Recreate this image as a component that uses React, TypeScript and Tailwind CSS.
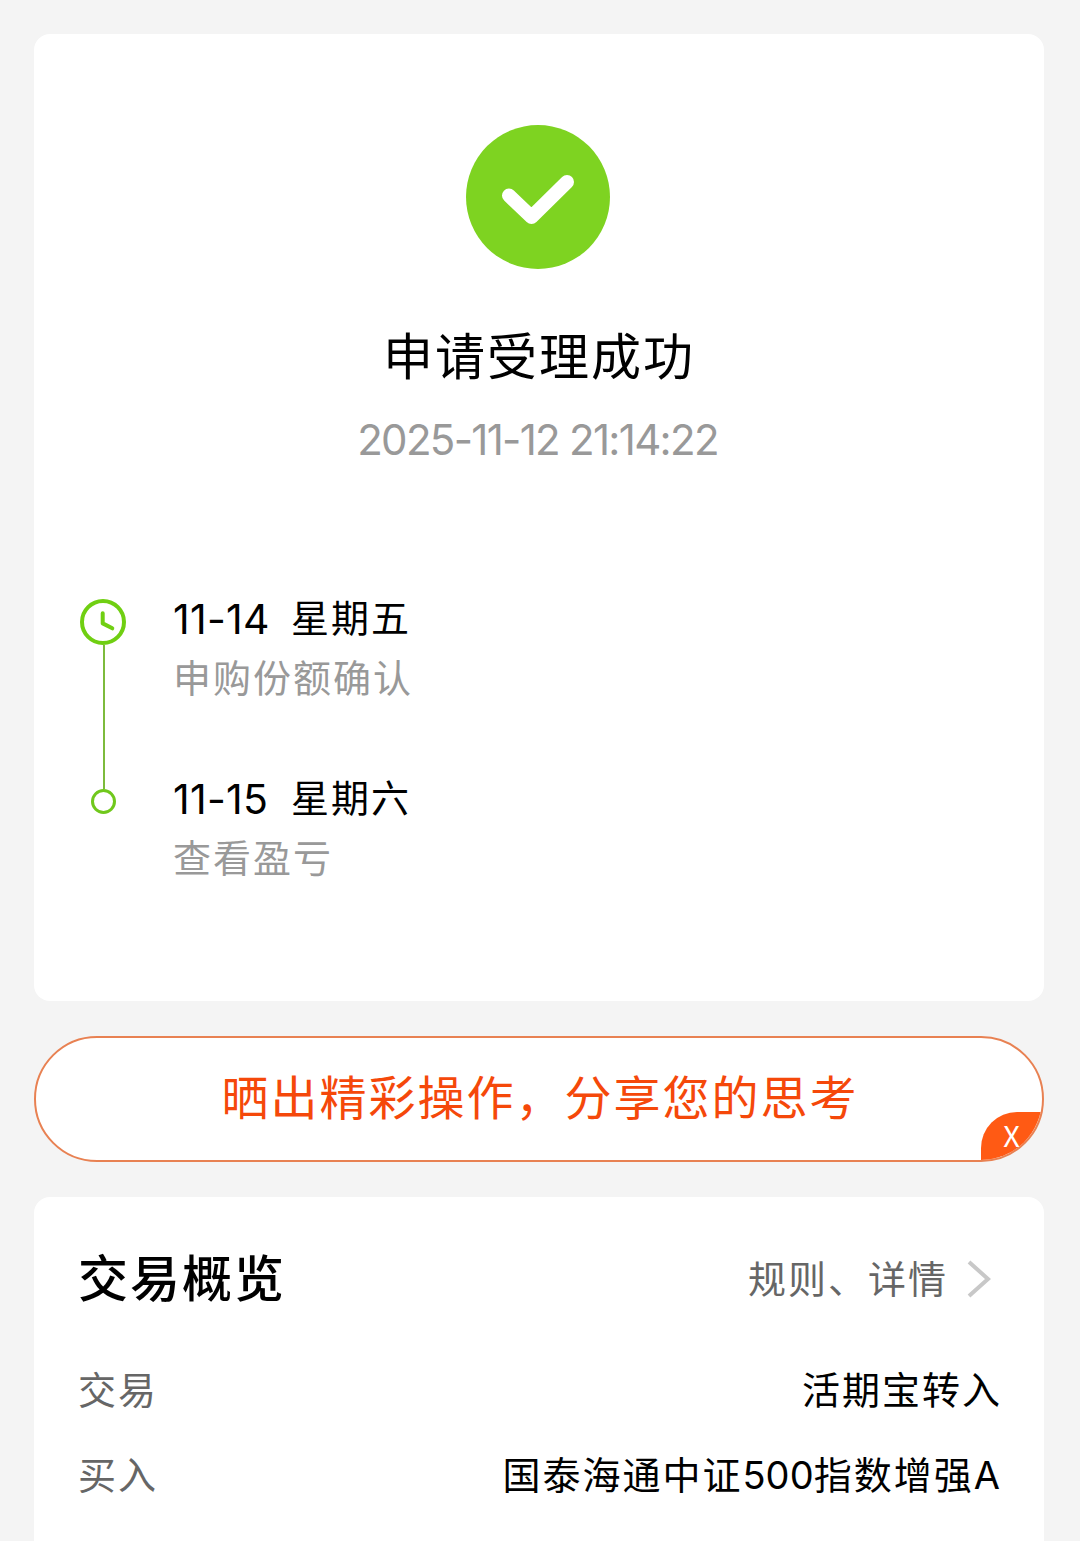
import { ReactNode } from 'react';

type Step = {
  date: string;
  weekday: string;
  label: string;
};

const steps: Step[] = [
  { date: '11-14', weekday: '星期五', label: '申购份额确认' },
  { date: '11-15', weekday: '星期六', label: '查看盈亏' },
];

function SuccessIcon() {
  return (
    <svg className="ml-[432px] block h-36 w-36" viewBox="0 0 144 144" fill="none">
      <circle cx="72" cy="72" r="72" fill="#7ed321" />
      <path d="M43 70.5 65.5 92 101 57" stroke="#fff" strokeWidth="14" strokeLinecap="round" strokeLinejoin="round" />
    </svg>
  );
}

function ClockIcon() {
  return (
    <svg className="block h-[46px] w-[46px] shrink-0" viewBox="0 0 46 46" fill="none">
      <circle cx="23" cy="23" r="21" stroke="#70cf12" strokeWidth="4" />
      <path d="M22.7 14.2V24.4L32.3 29.3" stroke="#70cf12" strokeWidth="4" strokeLinecap="round" strokeLinejoin="round" />
    </svg>
  );
}

function StepText({ step }: { step: Step }) {
  return (
    <div className="h-[180px] text-[38px] tracking-[2px]">
      <p className="flex h-[59px] text-black">
        <span className="w-[118px] text-[41px] leading-[60px] tracking-[0.3px]">{step.date}</span>
        <span className="leading-[58px]">{step.weekday}</span>
      </p>
      <p className="leading-[60px] text-[#999]">{step.label}</p>
    </div>
  );
}

function Row({ label, children }: { label: string; children: ReactNode }) {
  return (
    <div className="flex h-[85px] items-center justify-between text-[38px] tracking-[2px]">
      <span className="text-[#666]">{label}</span>
      <span className="-mr-[2px] text-black">{children}</span>
    </div>
  );
}

export default function App() {
  return (
    <main className="flex h-[1541px] w-[1080px] flex-col overflow-hidden bg-[#f4f4f4] pt-[34px] pr-9 pl-[34px] font-['Inter','Noto_Sans_CJK_SC',sans-serif]">
      {/* Result */}
      <section className="h-[967px] shrink-0 rounded-2xl bg-white pt-[91px]">
        <SuccessIcon />
        <h1 className="mt-[53px] text-center text-[50px] leading-[71px] tracking-[2px] text-black">申请受理成功</h1>
        <p className="mt-[17px] pr-[3px] text-center text-[42px] leading-[60px] tracking-[-1.7px] text-[#999]">
          2025-11-12 21:14:22
        </p>

        {/* Timeline */}
        <div className="mt-[119px] flex pl-[46px]">
          <div className="flex w-[46px] flex-col items-center pt-[10px]">
            <ClockIcon />
            <div className="ml-[2px] h-[144px] w-[2px] shrink-0 bg-[#7dbb3c]" />
            <div className="ml-px h-[25px] w-[25px] shrink-0 rounded-full border-3 border-[#70c81c]" />
          </div>
          <div className="ml-[47px]">
            {steps.map((step) => (
              <StepText key={step.date} step={step} />
            ))}
          </div>
        </div>
      </section>

      {/* Share button */}
      <button className="relative mt-[35px] h-[126px] shrink-0 overflow-hidden rounded-full border-2 border-[#e88152] bg-white text-[47px] tracking-[2px] text-[#f5480a]">
        <span className="block pb-[2px] pl-[2px] leading-[118px]">晒出精彩操作，分享您的思考</span>
        <span className="absolute right-0 bottom-0 flex h-12 w-[61px] items-center justify-center rounded-tl-[36px] bg-[#ff5a14] pb-[2px] font-['Noto_Sans_CJK_SC',sans-serif] text-[29px] tracking-normal text-white">
          X
        </span>
      </button>

      {/* Overview */}
      <section className="mt-[35px] h-[400px] shrink-0 rounded-t-2xl bg-white px-11 pt-[42px]">
        <div className="flex h-20 items-center justify-between">
          <h2 className="text-[50px] font-medium tracking-[2px] text-black">交易概览</h2>
          <div className="flex items-center pr-[9px] text-[38px] tracking-[2px] text-[#666]">
            规则、详情
            <svg className="ml-[19px] h-[38px] w-6" viewBox="0 0 24 38" fill="none">
              <path d="M2 2 21 19 2 36" stroke="#c8c8c8" strokeWidth="4" />
            </svg>
          </div>
        </div>
        <div className="mt-[29px]">
          <Row label="交易">活期宝转入</Row>
          <Row label="买入">
            国泰海通中证<span className="tracking-[0.1px]">500</span>指数增强A
          </Row>
        </div>
      </section>
    </main>
  );
}
